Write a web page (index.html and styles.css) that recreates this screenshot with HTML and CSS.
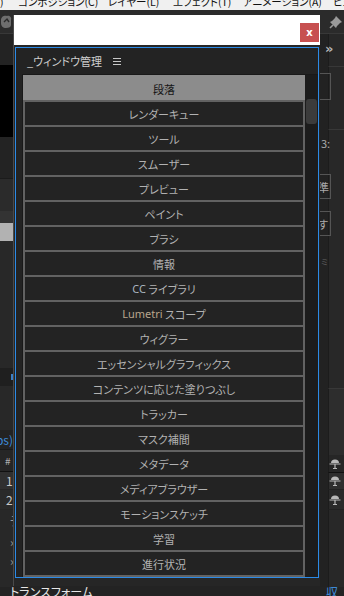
FILE: index.html
```html
<!DOCTYPE html>
<html lang="ja">

<head>
    <meta charset="UTF-8">
    <meta name="viewport" content="width=device-width, initial-scale=1.0">
    <title>ウィンドウ管理</title>
    <link rel="stylesheet" href="styles.css">
</head>

<body>
    <div class="app">
        <div class="menubar">
            <span class="menu-item m-prev">)</span>
            <span class="menu-item m-comp">コンポジション(C)</span>
            <span class="menu-item m-layer">レイヤー(L)</span>
            <span class="menu-item m-fx">エフェクト(T)</span>
            <span class="menu-item m-anim">アニメーション(A)</span>
            <span class="menu-item">ビュー</span>
        </div>
        <div class="toolbar">
            <svg class="tool-hand" width="13" height="15" viewBox="0 0 13 15">
                <path d="M1 6 C1 2 5 1 7 2 C9 1 12 3 11 6 L11 11 C11 13 9 14 6 14 C3 14 1 12 1 9 Z" fill="#6e6e6e"/>
                <path d="M4 8 L7 5 L9 8" fill="none" stroke="#2b2b2b" stroke-width="1.4"/>
            </svg>
            <svg class="tool-pin" width="14" height="14" viewBox="0 0 14 14">
                <path d="M7 1 L13 7 L11 8 L8 11 L7 13 L1 7 L3 6 L6 3 Z" fill="#9a9a9a"/>
                <path d="M4 10 L1 13" stroke="#9a9a9a" stroke-width="1.6"/>
            </svg>
        </div>
        <div class="workspace">
            <div class="side side-left">
                <div class="blk" style="height:31px"></div>
                <div class="blk viewer" style="height:72px"></div>
                <div class="blk" style="height:41px"></div>
                <div class="blk blk-line" style="height:33px"></div>
                <div class="blk blk-mid" style="height:12px"></div>
                <div class="blk blk-light" style="height:18px"></div>
                <div class="blk blk-panel" style="height:127px"></div>
                <div class="blk blk-dark" style="height:18px"><span class="tick"></span></div>
                <div class="blk blk-panel" style="height:44px"></div>
                <div class="blk blk-fps" style="height:20px">30.00 fps)</div>
                <div class="blk blk-head" style="height:22px">#</div>
                <div class="blk blk-row" style="height:18px">1</div>
                <div class="blk blk-row alt" style="height:20px">2</div>
                <div class="blk blk-tree" style="height:21px">テ</div>
                <div class="blk blk-tree" style="height:20px">›</div>
                <div class="blk blk-tree" style="height:19px">›</div>
                <div class="blk blk-panel" style="height:37px"></div>
            </div>
            <div class="center"></div>
            <div class="side side-right">
                <div class="rblk" style="height:32px"><span class="chev">»</span></div>
                <div class="rblk rblk-top" style="height:63px"><span class="rbox" style="margin-top:6px;height:27px"></span></div>
                <div class="rblk rblk-top" style="height:37px"><span class="rtext" style="margin-top:6px">3:</span></div>
                <div class="rblk" style="height:79px">
                    <span class="rbox" style="margin-top:8px"><span class="rtext">準</span></span>
                    <span class="rbox" style="margin-top:12px"><span class="rtext">す</span></span>
                </div>
                <div class="rblk" style="height:143px"><span class="rtext small" style="margin-top:10px">ミ</span></div>
                <div class="rblk rblk-top rblk-mid" style="height:67px"></div>
                <div class="rblk rrow rrow-head" style="height:18px">
                    <svg class="parent" width="12" height="10" viewBox="0 0 12 10">
                        <path d="M2 4 A4 3.5 0 0 1 10 4 Z" fill="#b9b9b9"/>
                        <path d="M0.5 5 H11.5 M6 5 V9.5 M4 9.5 H8" stroke="#b9b9b9" stroke-width="1.2"/>
                    </svg>
                </div>
                <div class="rblk rrow" style="height:17px">
                    <svg class="parent" width="12" height="10" viewBox="0 0 12 10">
                        <path d="M2 4 A4 3.5 0 0 1 10 4 Z" fill="#b9b9b9"/>
                        <path d="M0.5 5 H11.5 M6 5 V9.5 M4 9.5 H8" stroke="#b9b9b9" stroke-width="1.2"/>
                    </svg>
                </div>
                <div class="rblk rrow alt" style="height:20px">
                    <svg class="parent" width="12" height="10" viewBox="0 0 12 10">
                        <path d="M2 4 A4 3.5 0 0 1 10 4 Z" fill="#b9b9b9"/>
                        <path d="M0.5 5 H11.5 M6 5 V9.5 M4 9.5 H8" stroke="#b9b9b9" stroke-width="1.2"/>
                    </svg>
                </div>
                <div class="rblk" style="height:77px"></div>
            </div>
        </div>
        <div class="statusrow">
            <span class="status-text">トランスフォーム</span>
            <span class="status-blue">収</span>
        </div>
    </div>

    <div class="window">
        <div class="titlebar">
            <div class="close">x</div>
        </div>
        <div class="panel">
            <div class="panel-head">
                <span class="panel-title">_ウィンドウ管理</span>
                <svg class="menu-icon" width="8" height="7" viewBox="0 0 8 7">
                    <path d="M0 0.5 H8 M0 3.5 H8 M0 6.5 H8" stroke="#c8c8c8" stroke-width="1"/>
                </svg>
            </div>
            <div class="list">
                <div class="items">
                    <div class="item active">段落</div>
                    <div class="item">レンダーキュー</div>
                    <div class="item">ツール</div>
                    <div class="item">スムーザー</div>
                    <div class="item">プレビュー</div>
                    <div class="item">ペイント</div>
                    <div class="item">ブラシ</div>
                    <div class="item">情報</div>
                    <div class="item"><span class="latin">CC</span>&nbsp;ライブラリ</div>
                    <div class="item"><span class="latin lumetri">Lumetri</span>&nbsp;スコープ</div>
                    <div class="item">ウィグラー</div>
                    <div class="item">エッセンシャルグラフィックス</div>
                    <div class="item">コンテンツに応じた塗りつぶし</div>
                    <div class="item">トラッカー</div>
                    <div class="item">マスク補間</div>
                    <div class="item">メタデータ</div>
                    <div class="item">メディアブラウザー</div>
                    <div class="item">モーションスケッチ</div>
                    <div class="item">学習</div>
                    <div class="item">進行状況</div>
                </div>
                <div class="scroll">
                    <div class="thumb"></div>
                </div>
            </div>
        </div>
    </div>
</body>

</html>
```

FILE: styles.css
```css
body {
    margin: 0;
    width: 344px;
    height: 596px;
    overflow: hidden;
    position: relative;
    background-color: #262626;
    font-family: "Noto Sans CJK JP", "Noto Sans", sans-serif;
    font-feature-settings: "palt";
}

.app {
    display: flex;
    flex-direction: column;
    height: 596px;
}

/* barra de menu (cortada no topo) */
.menubar {
    height: 10px;
    overflow: hidden;
    background-color: #f0f0f0;
    display: flex;
    color: #111;
    font-size: 10.5px;
    line-height: 16px;
    white-space: nowrap;
}

.menu-item {
    flex-shrink: 0;
    margin-top: -6px;
}

.m-prev {
    width: 18px;
}

.m-comp {
    width: 90px;
}

.m-layer {
    width: 65px;
}

.m-fx {
    width: 70px;
}

.m-anim {
    width: 90px;
}

.toolbar {
    height: 24px;
    background-color: #2b2b2b;
    border-bottom: 1px solid #383838;
    display: flex;
    justify-content: space-between;
    align-items: center;
    box-sizing: border-box;
}

.tool-pin {
    margin-right: 1px;
}

.workspace {
    flex: 1;
    display: flex;
    min-height: 0;
}

.side {
    display: flex;
    flex-direction: column;
    overflow: hidden;
}

.side-left {
    width: 13px;
}

.center {
    flex: 1;
    background-color: #232323;
}

.side-right {
    width: 24px;
    background-color: #222;
}

.blk {
    flex-shrink: 0;
    background-color: #232323;
    box-sizing: border-box;
    display: flex;
    align-items: center;
    font-size: 10px;
    color: #aaa;
    white-space: nowrap;
}

.viewer {
    background-color: #000;
}

.blk-line {
    background-color: #2b2b2b;
    border-top: 1px solid #1b1b1b;
}

.blk-mid {
    background-color: #333;
}

.blk-light {
    background-color: #b2b2b2;
}

.blk-panel {
    background-color: #282828;
}

.blk-dark {
    background-color: #1f1f1f;
    justify-content: flex-end;
}

.tick {
    width: 2px;
    height: 6px;
    background-color: #3d7fc4;
}

.blk-fps {
    justify-content: flex-end;
    color: #3d8ad8;
    font-size: 12px;
    background-color: #232323;
    border-bottom: 1px solid #1a1a1a;
}

.blk-head {
    background-color: #262626;
    border-bottom: 1px solid #111;
    padding-left: 5px;
    color: #b0b0b0;
}

.blk-row {
    background-color: #303030;
    padding-left: 6px;
    color: #c8c8c8;
    font-size: 12px;
    border-bottom: 1px solid #262626;
}

.blk-row.alt {
    background-color: #2a2a2a;
}

.blk-tree {
    background-color: #282828;
    padding-left: 10px;
    color: #999;
    font-size: 12px;
}

.rblk {
    flex-shrink: 0;
    box-sizing: border-box;
    margin-left: 8px;
    background-color: #282828;
    border-left: 1px solid #1c1c1c;
    display: flex;
    flex-direction: column;
    align-items: flex-start;
}

.rblk-top {
    border-top: 1px solid #383838;
}

.rblk-mid {
    background-color: #2d2d2d;
}

.chev {
    margin-top: 8px;
    margin-left: -4px;
    color: #b5b5b5;
    font: bold 13px "DejaVu Sans", sans-serif;
    line-height: 13px;
}

.rbox {
    margin-left: -9px;
    width: 11px;
    height: 25px;
    border: 1px solid #555;
    border-left: none;
    box-sizing: border-box;
    display: flex;
    align-items: center;
    overflow: hidden;
}

.rtext {
    margin-left: -8px;
    color: #aaa;
    font-size: 11px;
    line-height: 14px;
}

.rbox .rtext {
    margin-left: -2px;
}

.rtext.small {
    font-size: 8px;
    color: #777;
}

.rrow {
    background-color: #2e2e2e;
    border-bottom: 1px solid #222;
    justify-content: center;
}

.rrow-head {
    background-color: #262626;
    border-bottom: 1px solid #111;
}

.rrow.alt {
    background-color: #2a2a2a;
}

.statusrow {
    height: 9px;
    background-color: #232323;
    display: flex;
    justify-content: space-between;
    overflow: hidden;
    font-size: 12px;
    line-height: 14px;
    white-space: nowrap;
}

.status-text {
    margin-left: 10px;
    margin-top: -2px;
    color: #e6e6e6;
}

.status-blue {
    margin-right: 6px;
    margin-top: -2px;
    color: #3d8ad8;
}

/* janela flutuante */
.window {
    position: absolute;
    left: 13px;
    top: 15px;
    width: 307px;
    box-sizing: border-box;
    border-left: 1px solid #4a4a4a;
    background-color: #262626;
    padding-bottom: 8px;
}

.titlebar {
    height: 30px;
    box-sizing: border-box;
    background-color: #fff;
    display: flex;
    justify-content: flex-end;
    align-items: flex-start;
    padding-top: 8px;
    padding-right: 1px;
}

.close {
    width: 19px;
    height: 19px;
    background-color: #c75050;
    color: #fff;
    font: bold 10px "DejaVu Sans", sans-serif;
    display: flex;
    align-items: center;
    justify-content: center;
    line-height: 10px;
}

.panel {
    margin: 2px 1px 0 1px;
    border: 1px solid #2b8ae6;
    background-color: #232323;
    padding-left: 6px;
}

.panel-head {
    height: 26px;
    display: flex;
    align-items: center;
    padding-left: 5px;
    gap: 11px;
    color: #cfcfcf;
    font-size: 11px;
}

.menu-icon {
    margin-top: 1px;
}

.list {
    display: flex;
    border-top: 1px solid #191919;
    border-left: 1px solid #191919;
}

.items {
    width: 282px;
    display: flex;
    flex-direction: column;
}

.item {
    height: 25px;
    box-sizing: border-box;
    border: 2px solid #626262;
    border-bottom: none;
    background-color: #232323;
    color: #b2b2b2;
    font-size: 11px;
    display: flex;
    align-items: center;
    justify-content: center;
    white-space: nowrap;
}

.item:last-child {
    height: 27px;
    border-bottom: 2px solid #626262;
}

.item.active {
    background-color: #8c8c8c;
    border-color: #8c8c8c;
    color: #151515;
}

.latin {
    font-family: "Noto Sans", sans-serif;
    color: #a9b4bf;
}

.lumetri {
    color: #b9a58c;
}

.scroll {
    width: 13px;
    background-color: #1c1c1c;
}

.thumb {
    margin: 24px 1px 0 1px;
    height: 25px;
    border-radius: 3px;
    background-color: #3b3b3b;
}
```
